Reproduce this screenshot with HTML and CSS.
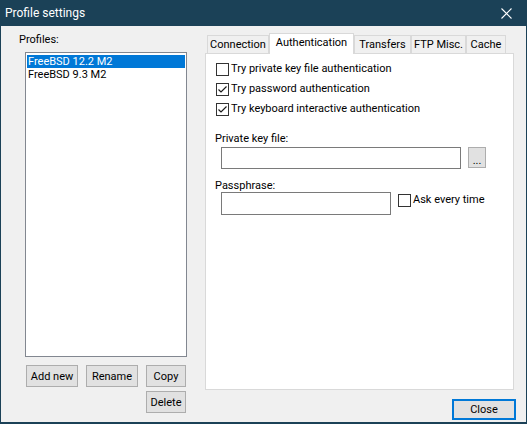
FILE: index.html
```html
<!DOCTYPE html>
<html>
<head>
<meta charset="utf-8">
<link rel="stylesheet" href="styles.css">
</head>
<body>
<div class="window">
  <div class="titlebar">
    <span class="title">Profile settings</span>
    <svg class="close-x" width="11" height="11" viewBox="0 0 11 11"><path d="M0.5 0.5 L10.5 10.5 M10.5 0.5 L0.5 10.5" stroke="#ffffff" stroke-width="1.1" fill="none"/></svg>
  </div>
  <div class="client">
    <div class="left">
      <div class="label">Profiles:</div>
      <div class="listbox">
        <div class="item selected">FreeBSD 12.2 M2</div>
        <div class="item">FreeBSD 9.3 M2</div>
      </div>
      <div class="btngrid">
        <button class="btn">Add new</button>
        <button class="btn">Rename</button>
        <button class="btn">Copy</button>
        <button class="btn btn-delete">Delete</button>
      </div>
    </div>
    <div class="right">
      <div class="tabs">
        <div class="tab tab-conn">Connection</div>
        <div class="tab tab-auth active">Authentication</div>
        <div class="tab tab-trans">Transfers</div>
        <div class="tab tab-ftp">FTP Misc.</div>
        <div class="tab tab-cache">Cache</div>
      </div>
      <div class="panel">
        <div class="cbrow">
          <span class="cb"></span><span class="cbtext">Try private key file authentication</span>
        </div>
        <div class="cbrow">
          <span class="cb"><svg width="11" height="11" viewBox="0 0 11 11"><polyline points="1.5,5.5 4,8 9.5,2.5" fill="none" stroke="#1a1a1a" stroke-width="1.2"/></svg></span><span class="cbtext">Try password authentication</span>
        </div>
        <div class="cbrow">
          <span class="cb"><svg width="11" height="11" viewBox="0 0 11 11"><polyline points="1.5,5.5 4,8 9.5,2.5" fill="none" stroke="#1a1a1a" stroke-width="1.2"/></svg></span><span class="cbtext">Try keyboard interactive authentication</span>
        </div>
        <div class="field-label label-key">Private key file:</div>
        <div class="fieldrow">
          <div class="input input-key"></div>
          <button class="btn btn-browse">...</button>
        </div>
        <div class="field-label label-pass">Passphrase:</div>
        <div class="fieldrow">
          <div class="input input-pass"></div>
          <span class="cb cb-ask"></span><span class="cbtext ask-text">Ask every time</span>
        </div>
      </div>
      <div class="footer">
        <button class="btn btn-default">Close</button>
      </div>
    </div>
  </div>
</div>
</body>
</html>
```

FILE: styles.css
```css
* { box-sizing: border-box; }
html, body { margin: 0; padding: 0; }
body {
  font-family: Roboto, "Noto Sans", sans-serif;
  font-size: 11px;
  line-height: 15px;
  color: #000;
  background: #1b4157;
}
.window {
  width: 527px;
  height: 424px;
  background: #1b4157;
  padding: 0 1px 2px 1px;
  display: flex;
  flex-direction: column;
}
.titlebar {
  height: 26px;
  flex: none;
  display: flex;
  align-items: center;
  justify-content: space-between;
  padding: 0 14px 0 4px;
  color: #ffffff;
}
.title { font-size: 12px; }
.close-x { display: block; }

.client {
  flex: 1;
  background: #f0f0f0;
  display: flex;
}

/* left column */
.left {
  width: 204px;
  flex: none;
  padding: 6px 0 0 18px;
}
.label { height: 15px; }
.listbox {
  margin: 5px 0 0 6px;
  width: 162px;
  height: 305px;
  border: 1px solid #828790;
  background: #ffffff;
  padding: 2px 1px;
}
.item {
  height: 13px;
  line-height: 13px;
  padding-left: 1px;
  white-space: nowrap;
}
.item.selected {
  background: #0078d7;
  color: #ffffff;
}
.btngrid {
  margin: 8px 0 0 7px;
  display: grid;
  grid-template-columns: 52px 52px 40px;
  column-gap: 8px;
  row-gap: 4px;
}
.btn {
  font-family: inherit;
  font-size: 11px;
  line-height: 15px;
  height: 22px;
  padding: 0;
  margin: 0;
  background: #e1e1e1;
  border: 1px solid #adadad;
  color: #000;
}
.btn-delete { grid-column: 3; }

/* right column */
.right {
  width: 320px;
  flex: none;
  padding: 7px 9px 0 0;
  display: flex;
  flex-direction: column;
}
.tabs {
  height: 20px;
  display: flex;
  align-items: flex-end;
  padding-left: 2px;
  position: relative;
  z-index: 1;
}
.tab {
  height: 18px;
  line-height: 17px;
  text-align: center;
  border: 1px solid #d9d9d9;
  border-bottom: none;
  background: #f0f0f0;
  white-space: nowrap;
}
.tab-conn { width: 62px; }
.tab-auth { width: 85px; }
.tab-trans { width: 57px; }
.tab-ftp { width: 55px; }
.tab-cache { width: 40px; }
.tab.active {
  height: 21px;
  line-height: 17px;
  background: #ffffff;
  margin-bottom: -1px;
}
.panel {
  width: 309px;
  height: 337px;
  border: 1px solid #d9d9d9;
  background: #ffffff;
  padding: 5px 0 0 9px;
}
.cbrow {
  height: 20px;
  display: flex;
  align-items: flex-start;
  gap: 2px;
}
.cb {
  width: 13px;
  height: 13px;
  flex: none;
  border: 1px solid #333333;
  background: #ffffff;
  margin: 4px 0 0 1px;
  display: flex;
  align-items: center;
  justify-content: center;
}
.cb svg { display: block; }
.cbtext {
  margin-top: 2px;
  white-space: nowrap;
}
.field-label { height: 15px; }
.label-key { margin-top: 12px; }
.label-pass { margin-top: 9px; }
.fieldrow {
  display: flex;
  align-items: flex-start;
  padding-left: 6px;
  margin-top: 1px;
}
.label-pass + .fieldrow { margin-top: -1px; }
.input {
  height: 22px;
  border: 1px solid #7a7a7a;
  background: #ffffff;
  flex: none;
}
.input-key { width: 240px; }
.input-pass { width: 170px; height: 23px; }
.btn-browse {
  width: 18px;
  height: 21px;
  margin-left: 7px;
  line-height: 21px;
  font-size: 11px;
  padding-top: 2px;
}
.cb-ask { margin: 2px 0 0 7px; }
.ask-text { margin: 0 0 0 2px; }

.footer {
  display: flex;
  justify-content: flex-end;
  margin-top: 9px;
}
.btn-default {
  width: 64px;
  height: 21px;
  border: 2px solid #0078d7;
  line-height: 15px;
}
```
